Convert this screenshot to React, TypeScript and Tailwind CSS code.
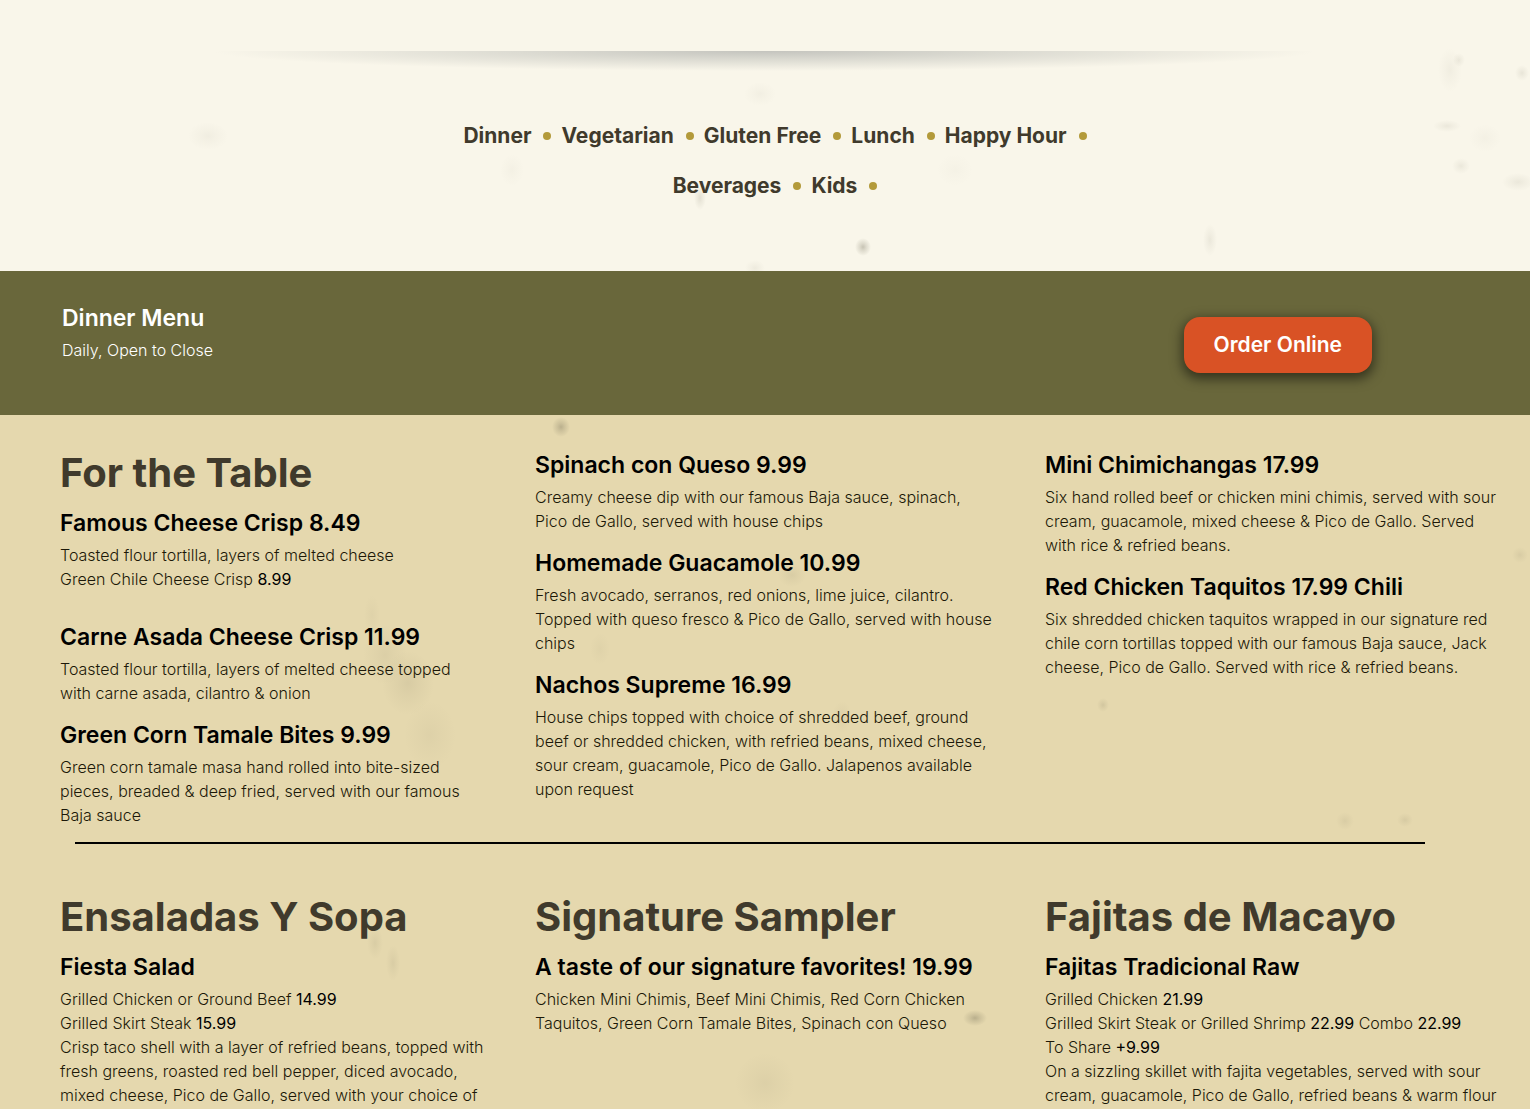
import { Fragment } from "react";

type Item = { title: string; lines: string[]; spaced?: boolean };
type Column = { heading?: string; items: Item[] };
type Smudge = [x: number, y: number, rx: number, ry: number, opacity: number];

const NAV = ["Dinner", "Vegetarian", "Gluten Free", "Lunch", "Happy Hour", "Beverages", "Kids"];

const STARTERS: Column[] = [
  {
    heading: "For the Table",
    items: [
      {
        title: "Famous Cheese Crisp 8.49",
        lines: ["Toasted flour tortilla, layers of melted cheese", "Green Chile Cheese Crisp *8.99*"],
        spaced: true,
      },
      {
        title: "Carne Asada Cheese Crisp 11.99",
        lines: ["Toasted flour tortilla, layers of melted cheese topped", "with carne asada, cilantro & onion"],
      },
      {
        title: "Green Corn Tamale Bites 9.99",
        lines: [
          "Green corn tamale masa hand rolled into bite-sized",
          "pieces, breaded & deep fried, served with our famous",
          "Baja sauce",
        ],
      },
    ],
  },
  {
    items: [
      {
        title: "Spinach con Queso 9.99",
        lines: ["Creamy cheese dip with our famous Baja sauce, spinach,", "Pico de Gallo, served with house chips"],
      },
      {
        title: "Homemade Guacamole 10.99",
        lines: [
          "Fresh avocado, serranos, red onions, lime juice, cilantro.",
          "Topped with queso fresco & Pico de Gallo, served with house",
          "chips",
        ],
      },
      {
        title: "Nachos Supreme 16.99",
        lines: [
          "House chips topped with choice of shredded beef, ground",
          "beef or shredded chicken, with refried beans, mixed cheese,",
          "sour cream, guacamole, Pico de Gallo. Jalapenos available",
          "upon request",
        ],
      },
    ],
  },
  {
    items: [
      {
        title: "Mini Chimichangas 17.99",
        lines: [
          "Six hand rolled beef or chicken mini chimis, served with sour",
          "cream, guacamole, mixed cheese & Pico de Gallo. Served",
          "with rice & refried beans.",
        ],
      },
      {
        title: "Red Chicken Taquitos 17.99 Chili",
        lines: [
          "Six shredded chicken taquitos wrapped in our signature red",
          "chile corn tortillas topped with our famous Baja sauce, Jack",
          "cheese, Pico de Gallo. Served with rice & refried beans.",
        ],
      },
    ],
  },
];

const MAINS: Column[] = [
  {
    heading: "Ensaladas Y Sopa",
    items: [
      {
        title: "Fiesta Salad",
        lines: [
          "Grilled Chicken or Ground Beef *14.99*",
          "Grilled Skirt Steak *15.99*",
          "Crisp taco shell with a layer of refried beans, topped with",
          "fresh greens, roasted red bell pepper, diced avocado,",
          "mixed cheese, Pico de Gallo, served with your choice of",
        ],
      },
    ],
  },
  {
    heading: "Signature Sampler",
    items: [
      {
        title: "A taste of our signature favorites! 19.99",
        lines: ["Chicken Mini Chimis, Beef Mini Chimis, Red Corn Chicken", "Taquitos, Green Corn Tamale Bites, Spinach con Queso"],
      },
    ],
  },
  {
    heading: "Fajitas de Macayo",
    items: [
      {
        title: "Fajitas Tradicional Raw",
        lines: [
          "Grilled Chicken *21.99*",
          "Grilled Skirt Steak or Grilled Shrimp *22.99* Combo *22.99*",
          "To Share *+9.99*",
          "On a sizzling skillet with fajita vegetables, served with sour",
          "cream, guacamole, Pico de Gallo, refried beans & warm flour",
        ],
      },
    ],
  },
];

const HEADER_SMUDGES: Smudge[] = [
  [863, 247, 8, 9, 0.35],
  [700, 198, 6, 12, 0.16],
  [208, 136, 20, 14, 0.06],
  [1210, 240, 7, 16, 0.1],
  [1450, 70, 12, 22, 0.06],
  [1459, 60, 6, 7, 0.1],
  [1447, 126, 14, 6, 0.1],
  [1461, 166, 9, 8, 0.1],
  [1522, 73, 7, 8, 0.12],
  [1518, 182, 16, 9, 0.1],
  [1485, 138, 16, 14, 0.04],
  [760, 94, 16, 12, 0.05],
  [755, 268, 10, 8, 0.08],
  [512, 170, 12, 16, 0.04],
  [955, 170, 18, 16, 0.03],
];

const MENU_SMUDGES: Smudge[] = [
  [561, 12, 9, 10, 0.35],
  [385, 240, 22, 30, 0.08],
  [408, 268, 26, 32, 0.11],
  [430, 320, 26, 34, 0.06],
  [372, 200, 8, 20, 0.05],
  [792, 160, 14, 12, 0.1],
  [842, 302, 10, 16, 0.07],
  [975, 603, 12, 8, 0.36],
  [1103, 290, 6, 7, 0.16],
  [765, 668, 30, 30, 0.07],
  [1345, 406, 9, 9, 0.1],
  [1405, 405, 8, 7, 0.12],
  [1520, 140, 8, 8, 0.11],
  [375, 528, 8, 16, 0.1],
  [393, 548, 7, 18, 0.1],
  [600, 234, 10, 16, 0.05],
];

// Faint paper stains behind the content
function Smudges({ id, marks }: { id: string; marks: Smudge[] }) {
  return (
    <svg className="absolute inset-0 h-full w-full pointer-events-none" aria-hidden="true">
      <defs>
        <radialGradient id={id}>
          <stop offset="0" stopColor="#6b6650" />
          <stop offset="0.4" stopColor="#6b6650" stopOpacity="0.55" />
          <stop offset="1" stopColor="#6b6650" stopOpacity="0" />
        </radialGradient>
      </defs>
      {marks.map(([x, y, rx, ry, opacity]) => (
        <ellipse key={`${x}-${y}`} cx={x} cy={y} rx={rx} ry={ry} fill={`url(#${id})`} opacity={opacity} />
      ))}
    </svg>
  );
}

// Prices wrapped in asterisks are drawn a step heavier
function Line({ text }: { text: string }) {
  return (
    <span className="block">
      {text.split("*").map((part, i) =>
        i % 2 ? <b key={i} className="font-normal text-black">{part}</b> : <Fragment key={i}>{part}</Fragment>
      )}
    </span>
  );
}

function MenuColumns({ columns }: { columns: Column[] }) {
  return (
    <div className="grid grid-cols-3">
      {columns.map((col, i) => (
        <div key={i} className="min-w-0 px-[25px] first:pl-[60px]">
          {col.heading && (
            <h2 className="mb-[10px] text-[40px] leading-[48px] font-bold text-[#403a2c]">{col.heading}</h2>
          )}
          <div className="flex flex-col gap-[14px]">
            {col.items.map((item) => (
              <article key={item.title} className={item.spaced ? "pb-4" : ""}>
                <h3 className="mb-1 text-[23px] leading-8 font-semibold text-black">{item.title}</h3>
                <p className="text-base leading-6 font-light text-[#1c1808]">
                  {item.lines.map((line) => <Line key={line} text={line} />)}
                </p>
              </article>
            ))}
          </div>
        </div>
      ))}
    </div>
  );
}

export default function App() {
  return (
    <div className="flex min-h-screen flex-col font-['Inter',sans-serif]">
      <header className="relative bg-[#f9f6ea] pt-[51px] pb-[60px]">
        <Smudges id="stain-light" marks={HEADER_SMUDGES} />
        <div className="relative mx-auto h-5 w-[72%] bg-[radial-gradient(50%_100%_at_50%_0,#c4c4be,#dcdbd2_45%,transparent)]" />
        <nav className="relative mt-10 pl-[30px]">
          <ul className="mx-auto flex max-w-[700px] flex-wrap justify-center">
            {NAV.map((name) => (
              <li key={name} className="flex items-center pr-[10px]">
                <a href="#" className="text-[21px] leading-[50px] font-bold text-[#403a2c]">{name}</a>
                <span className="ml-3 h-2 w-2 rounded-full bg-[#b39a3a]" />
              </li>
            ))}
          </ul>
        </nav>
      </header>

      <section className="flex items-start justify-between bg-[#69673b] pt-[31px] pr-[158px] pb-[42px] pl-[62px] text-white">
        <div>
          <h1 className="mb-1 text-[23px] leading-8 font-semibold">Dinner Menu</h1>
          <p className="text-base leading-6 font-light">Daily, Open to Close</p>
        </div>
        <a
          href="#"
          className="mt-[15px] rounded-2xl bg-[#d95225] px-[30px] py-3 text-[21px] leading-8 font-semibold shadow-[0_4px_12px_2px_rgba(0,0,0,0.5)]"
        >
          Order Online
        </a>
      </section>

      <main className="relative flex-1 bg-[#e5d8ae] pt-[34px]">
        <Smudges id="stain-dark" marks={MENU_SMUDGES} />
        <div className="relative">
          <MenuColumns columns={STARTERS} />
          <hr className="mt-[15px] mr-[105px] mb-[49px] ml-[75px] border-t-2 border-black" />
          <MenuColumns columns={MAINS} />
        </div>
      </main>
    </div>
  );
}
